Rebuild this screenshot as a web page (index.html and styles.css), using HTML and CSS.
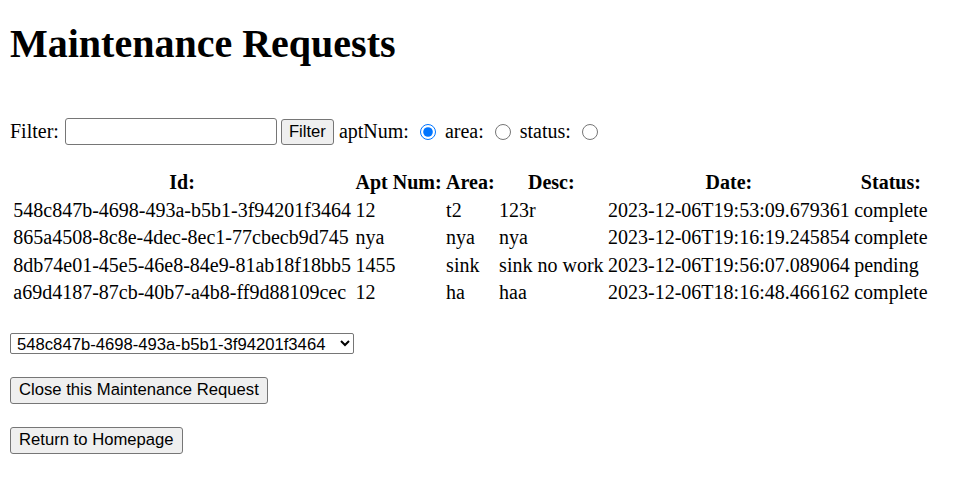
FILE: index.html
```html
<!DOCTYPE html>
<html>
<head>
<meta charset="utf-8">
<link rel="stylesheet" href="styles.css">
</head>
<body>
<h1 class="title">Maintenance Requests</h1>
<div class="filter-row">
  <span class="lbl">Filter:</span>
  <input class="filter-input" type="text">
  <button class="btn btn-filter" type="button">Filter</button>
  <span class="lbl">aptNum:</span>
  <input class="radio" type="radio" name="f" checked>
  <span class="lbl">area:</span>
  <input class="radio" type="radio" name="f">
  <span class="lbl">status:</span>
  <input class="radio" type="radio" name="f">
</div>
<table class="req-table">
  <thead>
    <tr><th>Id:</th><th>Apt Num:</th><th>Area:</th><th>Desc:</th><th>Date:</th><th>Status:</th></tr>
  </thead>
  <tbody>
    <tr><td>548c847b-4698-493a-b5b1-3f94201f3464</td><td>12</td><td>t2</td><td>123r</td><td>2023-12-06T19:53:09.679361</td><td>complete</td></tr>
    <tr><td>865a4508-8c8e-4dec-8ec1-77cbecb9d745</td><td>nya</td><td>nya</td><td>nya</td><td>2023-12-06T19:16:19.245854</td><td>complete</td></tr>
    <tr><td>8db74e01-45e5-46e8-84e9-81ab18f18bb5</td><td>1455</td><td>sink</td><td>sink no work</td><td>2023-12-06T19:56:07.089064</td><td>pending</td></tr>
    <tr><td>a69d4187-87cb-40b7-a4b8-ff9d88109cec</td><td>12</td><td>ha</td><td>haa</td><td>2023-12-06T18:16:48.466162</td><td>complete</td></tr>
  </tbody>
</table>
<div class="controls">
  <select class="sel">
    <option>548c847b-4698-493a-b5b1-3f94201f3464</option>
    <option>865a4508-8c8e-4dec-8ec1-77cbecb9d745</option>
    <option>8db74e01-45e5-46e8-84e9-81ab18f18bb5</option>
    <option>a69d4187-87cb-40b7-a4b8-ff9d88109cec</option>
  </select>
  <button class="btn btn-lg" type="button">Close this Maintenance Request</button>
  <button class="btn btn-lg" type="button">Return to Homepage</button>
</div>
</body>
</html>
```
FILE: styles.css
```css
body {
  margin: 10px;
  font-family: "Liberation Serif", "Times New Roman", serif;
  font-size: 20px;
  color: #000;
  background: #fff;
}
.title {
  font-size: 40px;
  font-weight: bold;
  margin: 11px 0 0;
  line-height: 46px;
}
.filter-row {
  margin-top: 51px;
  display: flex;
  align-items: center;
  height: 27px;
}
.lbl {
  line-height: 23px;
}
.filter-input {
  width: 212px;
  height: 27px;
  box-sizing: border-box;
  border: 1px solid #767676;
  border-radius: 3px;
  margin: 0 0 0 6px;
  padding: 1px 2px;
  font-size: 16.67px;
}
.filter-row .btn {
  margin: 0 5px 0 4px;
}
.btn-filter {
  padding: 0 8px;
}
.radio {
  margin: 0 9px 0 11px;
  width: 16px;
  height: 16px;
  accent-color: #0075ff;
}
.btn {
  font-family: "Liberation Sans", Arial, sans-serif;
  font-size: 16.67px;
  padding: 0 7px;
  border: 1px solid #767676;
  border-radius: 3px;
  background: #efefef;
  color: #000;
  height: 26px;
  line-height: 20px;
}
.btn-lg {
  height: 27px;
  padding: 0 8px;
}
.req-table {
  margin-top: 23px;
  border-spacing: 2.5px;
  border-collapse: separate;
}
.req-table th, .req-table td {
  padding: 1.25px;
  line-height: 23px;
  text-align: left;
  white-space: nowrap;
}
.req-table th {
  text-align: center;
}
.controls {
  margin-top: 25px;
  display: flex;
  flex-direction: column;
  align-items: flex-start;
  gap: 23px;
}
.sel {
  font-family: "Liberation Sans", Arial, sans-serif;
  font-size: 16.67px;
  height: 21px;
  width: 344px;
  padding: 0 0 0 2px;
  border: 1px solid #767676;
  border-radius: 2px;
  background: #fff;
  color: #000;
}
```
